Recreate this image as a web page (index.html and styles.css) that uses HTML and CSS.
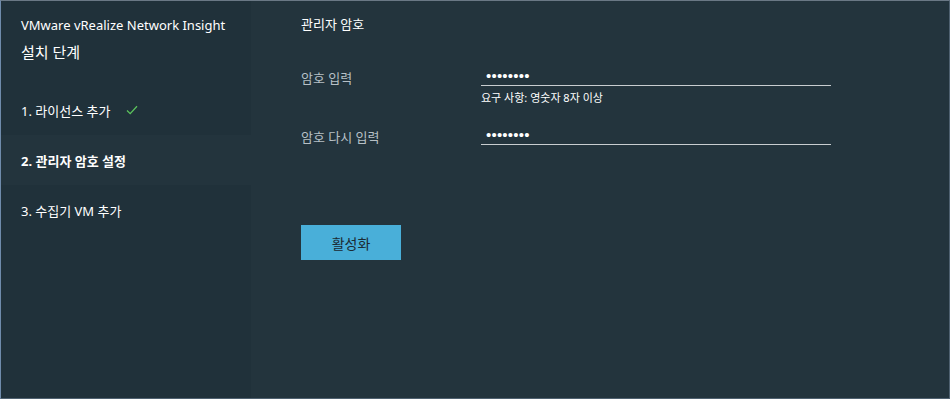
FILE: index.html
```html
<html>
<head>
<title>VMware vRealize Network Insight</title>
<link rel="stylesheet" href="styles.css">
</head>
<body>
<div class="frame">
  <div class="sidebar">
    <div class="brand">VMware vRealize Network Insight</div>
    <div class="steps-title">설치 단계</div>
    <div class="step done">1. 라이선스 추가
      <svg class="check" width="12" height="10" viewBox="0 0 12 10"><path d="M1 5.5 L4.2 8.6 L11 1.2" fill="none" stroke="#5cc45c" stroke-width="1.3"/></svg>
    </div>
    <div class="step active">2. 관리자 암호 설정</div>
    <div class="step">3. 수집기 VM 추가</div>
  </div>
  <div class="main">
    <div class="section-title">관리자 암호</div>
    <form name="pwdform">
      <div class="row">
        <label class="label">암호 입력</label>
        <div class="field">
          <input type="password" class="pwd" value="12345678">
          <div class="hint">요구 사항: 영숫자 8자 이상</div>
        </div>
      </div>
      <div class="row">
        <label class="label">암호 다시 입력</label>
        <div class="field">
          <input type="password" class="pwd" value="12345678">
        </div>
      </div>
      <div class="actions">
        <input type="button" class="btn" value="활성화">
      </div>
    </form>
  </div>
</div>
</body>
</html>
```

FILE: styles.css
```css
body {
    margin: 0;
    background: #23343d;
    font-family: "Noto Sans", "Noto Sans CJK KR", sans-serif;
}

.frame {
    display: flex;
    width: 948px;
    height: 397px;
    border: 1px solid #4f6170;
    border-left-color: #6f8bab;
    border-top-color: #6a7885;
    background: #23343d;
}

.sidebar {
    width: 250px;
    background: #20313a;
    color: #fff;
}

.brand {
    padding: 15px 0 0 20px;
    font-size: 13px;
    line-height: 18px;
}

.steps-title {
    padding: 8px 0 0 20px;
    font-size: 15px;
    line-height: 20px;
    height: 43px;
}

.step {
    height: 50px;
    display: flex;
    align-items: center;
    padding-left: 20px;
    font-size: 13px;
}

.step.active {
    background: #23343d;
    font-weight: bold;
}

.check {
    margin-left: 16px;
}

.main {
    flex: 1;
    padding: 14px 0 0 50px;
    color: #fff;
}

.section-title {
    font-size: 13px;
    line-height: 18px;
    height: 46px;
}

.row {
    display: flex;
}

.label {
    width: 180px;
    font-size: 13px;
    color: #b7c0c6;
    padding-top: 7px;
}

.field {
    width: 350px;
    height: 59px;
}

.pwd {
    width: 350px;
    height: 25px;
    background: transparent;
    border: none;
    border-bottom: 1px solid #c8cdd0;
    color: #fff;
    padding: 5px 0 0 5px;
    font-family: "Liberation Sans", sans-serif;
    font-size: 15px;
    outline: none;
    letter-spacing: 0.2px;
}

.hint {
    font-size: 11px;
    line-height: 15px;
    padding-top: 4px;
}

.actions {
    padding-top: 46px;
}

.btn {
    width: 100px;
    height: 35px;
    border: none;
    background: #49afd9;
    color: #1b2a32;
    font-family: "Noto Sans", "Noto Sans CJK KR", sans-serif;
    font-size: 14px;
    cursor: pointer;
}
```
